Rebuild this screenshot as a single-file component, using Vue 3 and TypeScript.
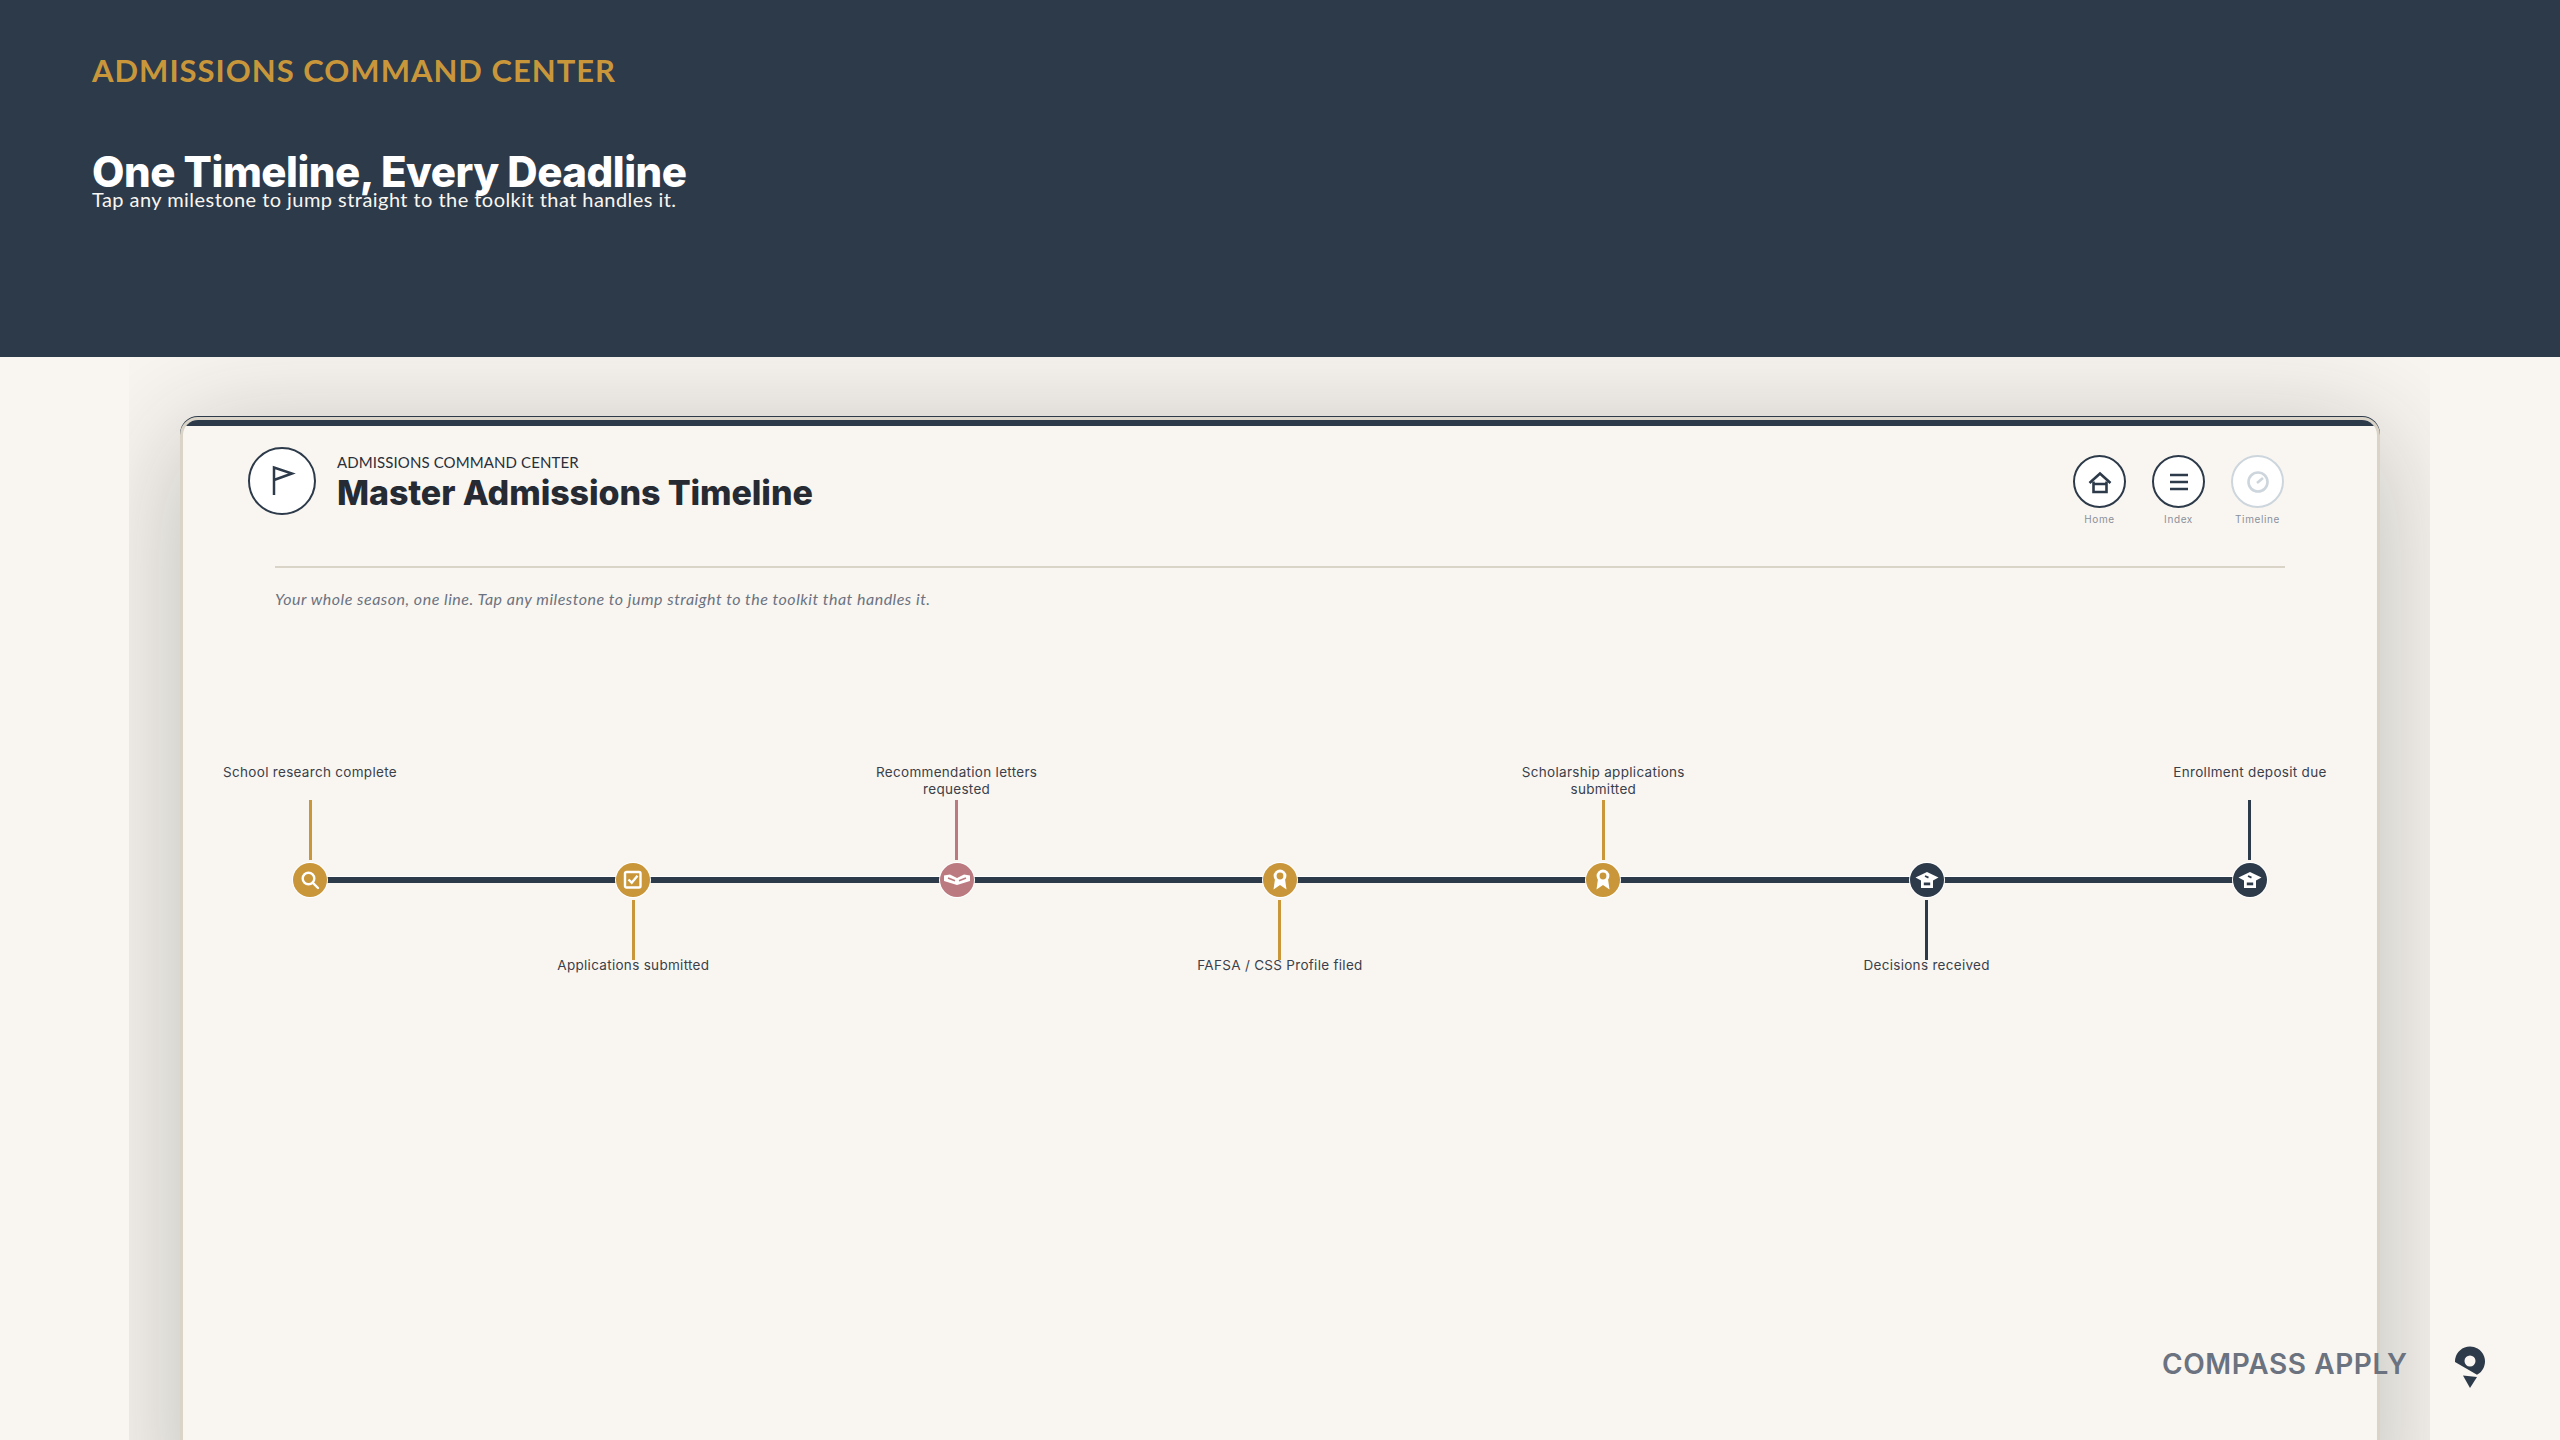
<script setup lang="ts">
type Tone = "gold" | "rose" | "navy";
type Icon = "search" | "check" | "book" | "award" | "cap";

interface Milestone {
  label: string;
  tone: Tone;
  icon: Icon;
  above: boolean;
}

const milestones: Milestone[] = [
  { label: "School research complete", tone: "gold", icon: "search", above: true },
  { label: "Applications submitted", tone: "gold", icon: "check", above: false },
  { label: "Recommendation letters requested", tone: "rose", icon: "book", above: true },
  { label: "FAFSA / CSS Profile filed", tone: "gold", icon: "award", above: false },
  { label: "Scholarship applications submitted", tone: "gold", icon: "award", above: true },
  { label: "Decisions received", tone: "navy", icon: "cap", above: false },
  { label: "Enrollment deposit due", tone: "navy", icon: "cap", above: true },
];
</script>

<template>
  <div class="page">
    <header class="hero">
      <div class="eyebrow">ADMISSIONS COMMAND CENTER</div>
      <h1>One Timeline, Every Deadline</h1>
      <p>Tap any milestone to jump straight to the toolkit that handles it.</p>
    </header>

    <main class="stage">
      <section class="card">
        <div class="card-head">
          <div class="brand">
            <div class="badge">
              <svg width="34" height="34" viewBox="0 0 34 34" fill="none" stroke="#2d3a4a" stroke-width="2.5">
                <path d="M9 31V3.500l18 6-18 6.500" />
              </svg>
            </div>
            <div class="brand-text">
              <div class="kicker">ADMISSIONS COMMAND CENTER</div>
              <h2>Master Admissions Timeline</h2>
            </div>
          </div>
          <nav class="nav">
            <div class="nav-item">
              <div class="nav-btn">
                <svg width="24" height="24" viewBox="0 0 24 24" fill="none" stroke="#2d3a4a" stroke-width="2.6">
                  <path d="M1.500 13 12 3.500 22.500 13" />
                  <path d="M5.500 11.500V22h13V11.500M5.500 14h13" />
                </svg>
              </div>
              <span>Home</span>
            </div>
            <div class="nav-item">
              <div class="nav-btn">
                <svg width="24" height="24" viewBox="0 0 24 24" fill="none" stroke="#2d3a4a" stroke-width="2.4">
                  <path d="M3 5h18M3 12h18M3 19h18" />
                </svg>
              </div>
              <span>Index</span>
            </div>
            <div class="nav-item current">
              <div class="nav-btn">
                <svg width="24" height="24" viewBox="0 0 24 24" fill="none" stroke="#cdd6dd" stroke-width="2.6">
                  <circle cx="12" cy="12" r="9.500" />
                  <path d="M11 13l6-5" />
                </svg>
              </div>
              <span>Timeline</span>
            </div>
          </nav>
        </div>

        <div class="intro">
          <p>Your whole season, one line. Tap any milestone to jump straight to the toolkit that handles it.</p>
        </div>

        <div class="timeline">
          <div class="track"></div>
          <div v-for="m in milestones" :key="m.label" class="node" :class="m.tone">
            <div class="upper">
              <template v-if="m.above">
                <div class="label">{{ m.label }}</div>
                <div class="stem"></div>
              </template>
            </div>
            <div class="dot">
              <svg class="glyph" width="20" height="20" viewBox="0 0 20 20" fill="none" stroke="#fff" stroke-width="2.4">
                <template v-if="m.icon === 'search'">
                  <circle cx="8.500" cy="8.500" r="5.800" />
                  <path d="M12.600 12.600 18 18" stroke-linecap="round" />
                </template>
                <template v-else-if="m.icon === 'check'">
                  <rect x="2" y="2" width="15.500" height="15.500" rx="1.500" />
                  <path d="M5.500 9.500l3.200 3.200 5.800-7" />
                </template>
                <template v-else-if="m.icon === 'book'">
                  <path d="M-3 5.500 3 4.500 10 8l7-3.500 6 1V11L10 15-3 11z" fill="#fff" stroke="none" />
                  <path d="M1 8 8 10.800M19 8 12 10.800" stroke="#bb7a80" stroke-width="1.600" />
                </template>
                <template v-else-if="m.icon === 'award'">
                  <path d="M5 9 3.500 19.500 10 15l6.500 4.500L15 9z" fill="#fff" stroke="none" />
                  <circle cx="10" cy="6" r="6.400" fill="#fff" stroke="none" />
                  <circle cx="10" cy="6" r="3.400" fill="#c9973a" stroke="none" />
                </template>
                <template v-else>
                  <path d="M-1.500 7.500 10 2l11.500 5.500-5.500 3V18H4v-7.500z" fill="#fff" stroke="none" />
                  <path d="M6.800 12.500h6.400v2.800H6.800z" fill="#2d3a4a" stroke="none" />
                  <path d="M8 6l3.500 1.600" stroke="#2d3a4a" stroke-width="1.800" />
                </template>
              </svg>
            </div>
            <div class="lower">
              <template v-if="!m.above">
                <div class="stem"></div>
                <div class="label">{{ m.label }}</div>
              </template>
            </div>
          </div>
        </div>
      </section>
    </main>

    <div class="signature">
      <span>COMPASS APPLY</span>
      <svg width="32" height="42" viewBox="0 0 32 42">
        <path fill="#2d3a4a" fill-rule="evenodd" d="M1 16A15 15 0 1 1 23 28.800zM16 9.500a5.500 5.500 0 1 0 0 11 5.500 5.500 0 0 0 0-11z" />
        <path fill="#2d3a4a" d="M9 29.500 23 31l-7 11z" />
      </svg>
    </div>
  </div>
</template>

<style>
html,
body {
  margin: 0;
  background: #f9f6f1;
}
</style>

<style scoped>
.page {
  position: relative;
  width: 2560px;
  height: 1440px;
  overflow: hidden;
  background: #f9f6f1;
  display: flex;
  flex-direction: column;
  font-family: Lato, "Open Sans", sans-serif;
}

.hero {
  height: 357px;
  flex: none;
  box-sizing: border-box;
  padding: 50px 92px 0;
  background: #2d3a4a;
}

.eyebrow {
  font-size: 31px;
  line-height: 40px;
  font-weight: 700;
  letter-spacing: 1px;
  color: #c9973a;
}

.hero h1 {
  margin: 59px 0 0;
  font-family: Inter, sans-serif;
  font-size: 42px;
  line-height: 46px;
  font-weight: 800;
  letter-spacing: -0.5px;
  color: #fff;
}

.hero p {
  margin: -8px 0 0;
  font-size: 20px;
  line-height: 24px;
  letter-spacing: 0.45px;
  color: #f9f6f1;
}

.stage {
  flex: 1;
  min-height: 0;
  margin: 0 130px 0 129px;
  padding: 60px 50px 0 51px;
  overflow: hidden;
}

.card {
  box-sizing: border-box;
  height: 1100px;
  background: #f9f6f1;
  border: 3px solid #d9d4c7;
  border-radius: 18px 18px 0 0;
  box-shadow: 0 -1px 0 #2d3a4a, 0 20px 120px 10px rgba(30, 30, 30, 0.24);
  overflow: hidden;
}

.card-head {
  display: flex;
  justify-content: space-between;
  padding: 21px 93px 0 65px;
  border-top: 6px solid #2d3a4a;
}

.brand {
  display: flex;
  gap: 21px;
}

.badge {
  width: 68px;
  height: 68px;
  box-sizing: border-box;
  border: 2.5px solid #2d3a4a;
  border-radius: 50%;
  background: #fff;
  display: flex;
  align-items: center;
  justify-content: center;
}

.brand-text {
  padding-top: 5px;
}

.kicker {
  font-size: 15px;
  line-height: 20px;
  letter-spacing: 0.1px;
  color: #2a2f3a;
}

.brand-text h2 {
  margin: 0;
  font-family: Inter, sans-serif;
  font-size: 34px;
  line-height: 42px;
  font-weight: 800;
  letter-spacing: -0.1px;
  color: #262a33;
}

.nav {
  display: flex;
  gap: 26px;
  padding-top: 8px;
}

.nav-item {
  width: 53px;
  display: flex;
  flex-direction: column;
  align-items: center;
  gap: 4px;
}

.nav-btn {
  width: 53px;
  height: 53px;
  box-sizing: border-box;
  border: 2.5px solid #2d3a4a;
  border-radius: 50%;
  background: #fff;
  display: flex;
  align-items: center;
  justify-content: center;
}

.nav-item span {
  font-family: Inter, sans-serif;
  font-size: 10px;
  line-height: 14px;
  letter-spacing: 0.6px;
  color: #8a909b;
}

.current .nav-btn {
  border-color: #cdd6dd;
}

.intro {
  margin: 40px 92px 0;
  padding-top: 21px;
  border-top: 2px solid #d9d4c7;
}

.intro p {
  margin: 0;
  font-size: 16px;
  line-height: 20px;
  letter-spacing: 0.5px;
  font-style: italic;
  color: #6b7280;
}

.timeline {
  position: relative;
  display: flex;
  justify-content: space-between;
  margin: 155px 110px 0;
}

.track {
  position: absolute;
  left: 17px;
  right: 17px;
  top: 113px;
  height: 6px;
  background: #2d3a4a;
  box-shadow: 0 -1px 0 #fff;
}

.node {
  position: relative;
  width: 34px;
  display: flex;
  flex-direction: column;
  align-items: center;
}

.upper,
.lower {
  display: flex;
  flex-direction: column;
  align-items: center;
  box-sizing: border-box;
}

.upper {
  height: 99px;
  justify-content: space-between;
  padding-bottom: 3px;
}

.lower {
  height: 95px;
  padding-top: 3px;
}

.stem {
  width: 3px;
  flex: none;
  height: 60px;
}

.upper .stem {
  margin-top: auto;
}

.lower .label {
  margin-top: -3px;
}

.label {
  width: 190px;
  flex: none;
  font-family: Inter, sans-serif;
  font-size: 13.500px;
  line-height: 17px;
  letter-spacing: 0.3px;
  text-align: center;
  color: #3a3f4a;
}

.dot {
  position: relative;
  width: 34px;
  height: 34px;
  flex: none;
  border-radius: 50%;
  box-shadow: 0 0 0 1px #fff;
  display: flex;
  align-items: center;
  justify-content: center;
}

.glyph {
  overflow: visible;
}

.gold .dot,
.gold .stem {
  background: #c9973a;
}

.rose .dot,
.rose .stem {
  background: #bb7a80;
}

.navy .dot,
.navy .stem {
  background: #2d3a4a;
}

.signature {
  position: absolute;
  left: 2162px;
  top: 1346px;
  width: 324px;
  display: flex;
  justify-content: space-between;
  font-family: Inter, sans-serif;
  font-size: 28px;
  line-height: 36px;
  font-weight: 600;
  letter-spacing: 0.6px;
  color: #6b7280;
}
</style>
